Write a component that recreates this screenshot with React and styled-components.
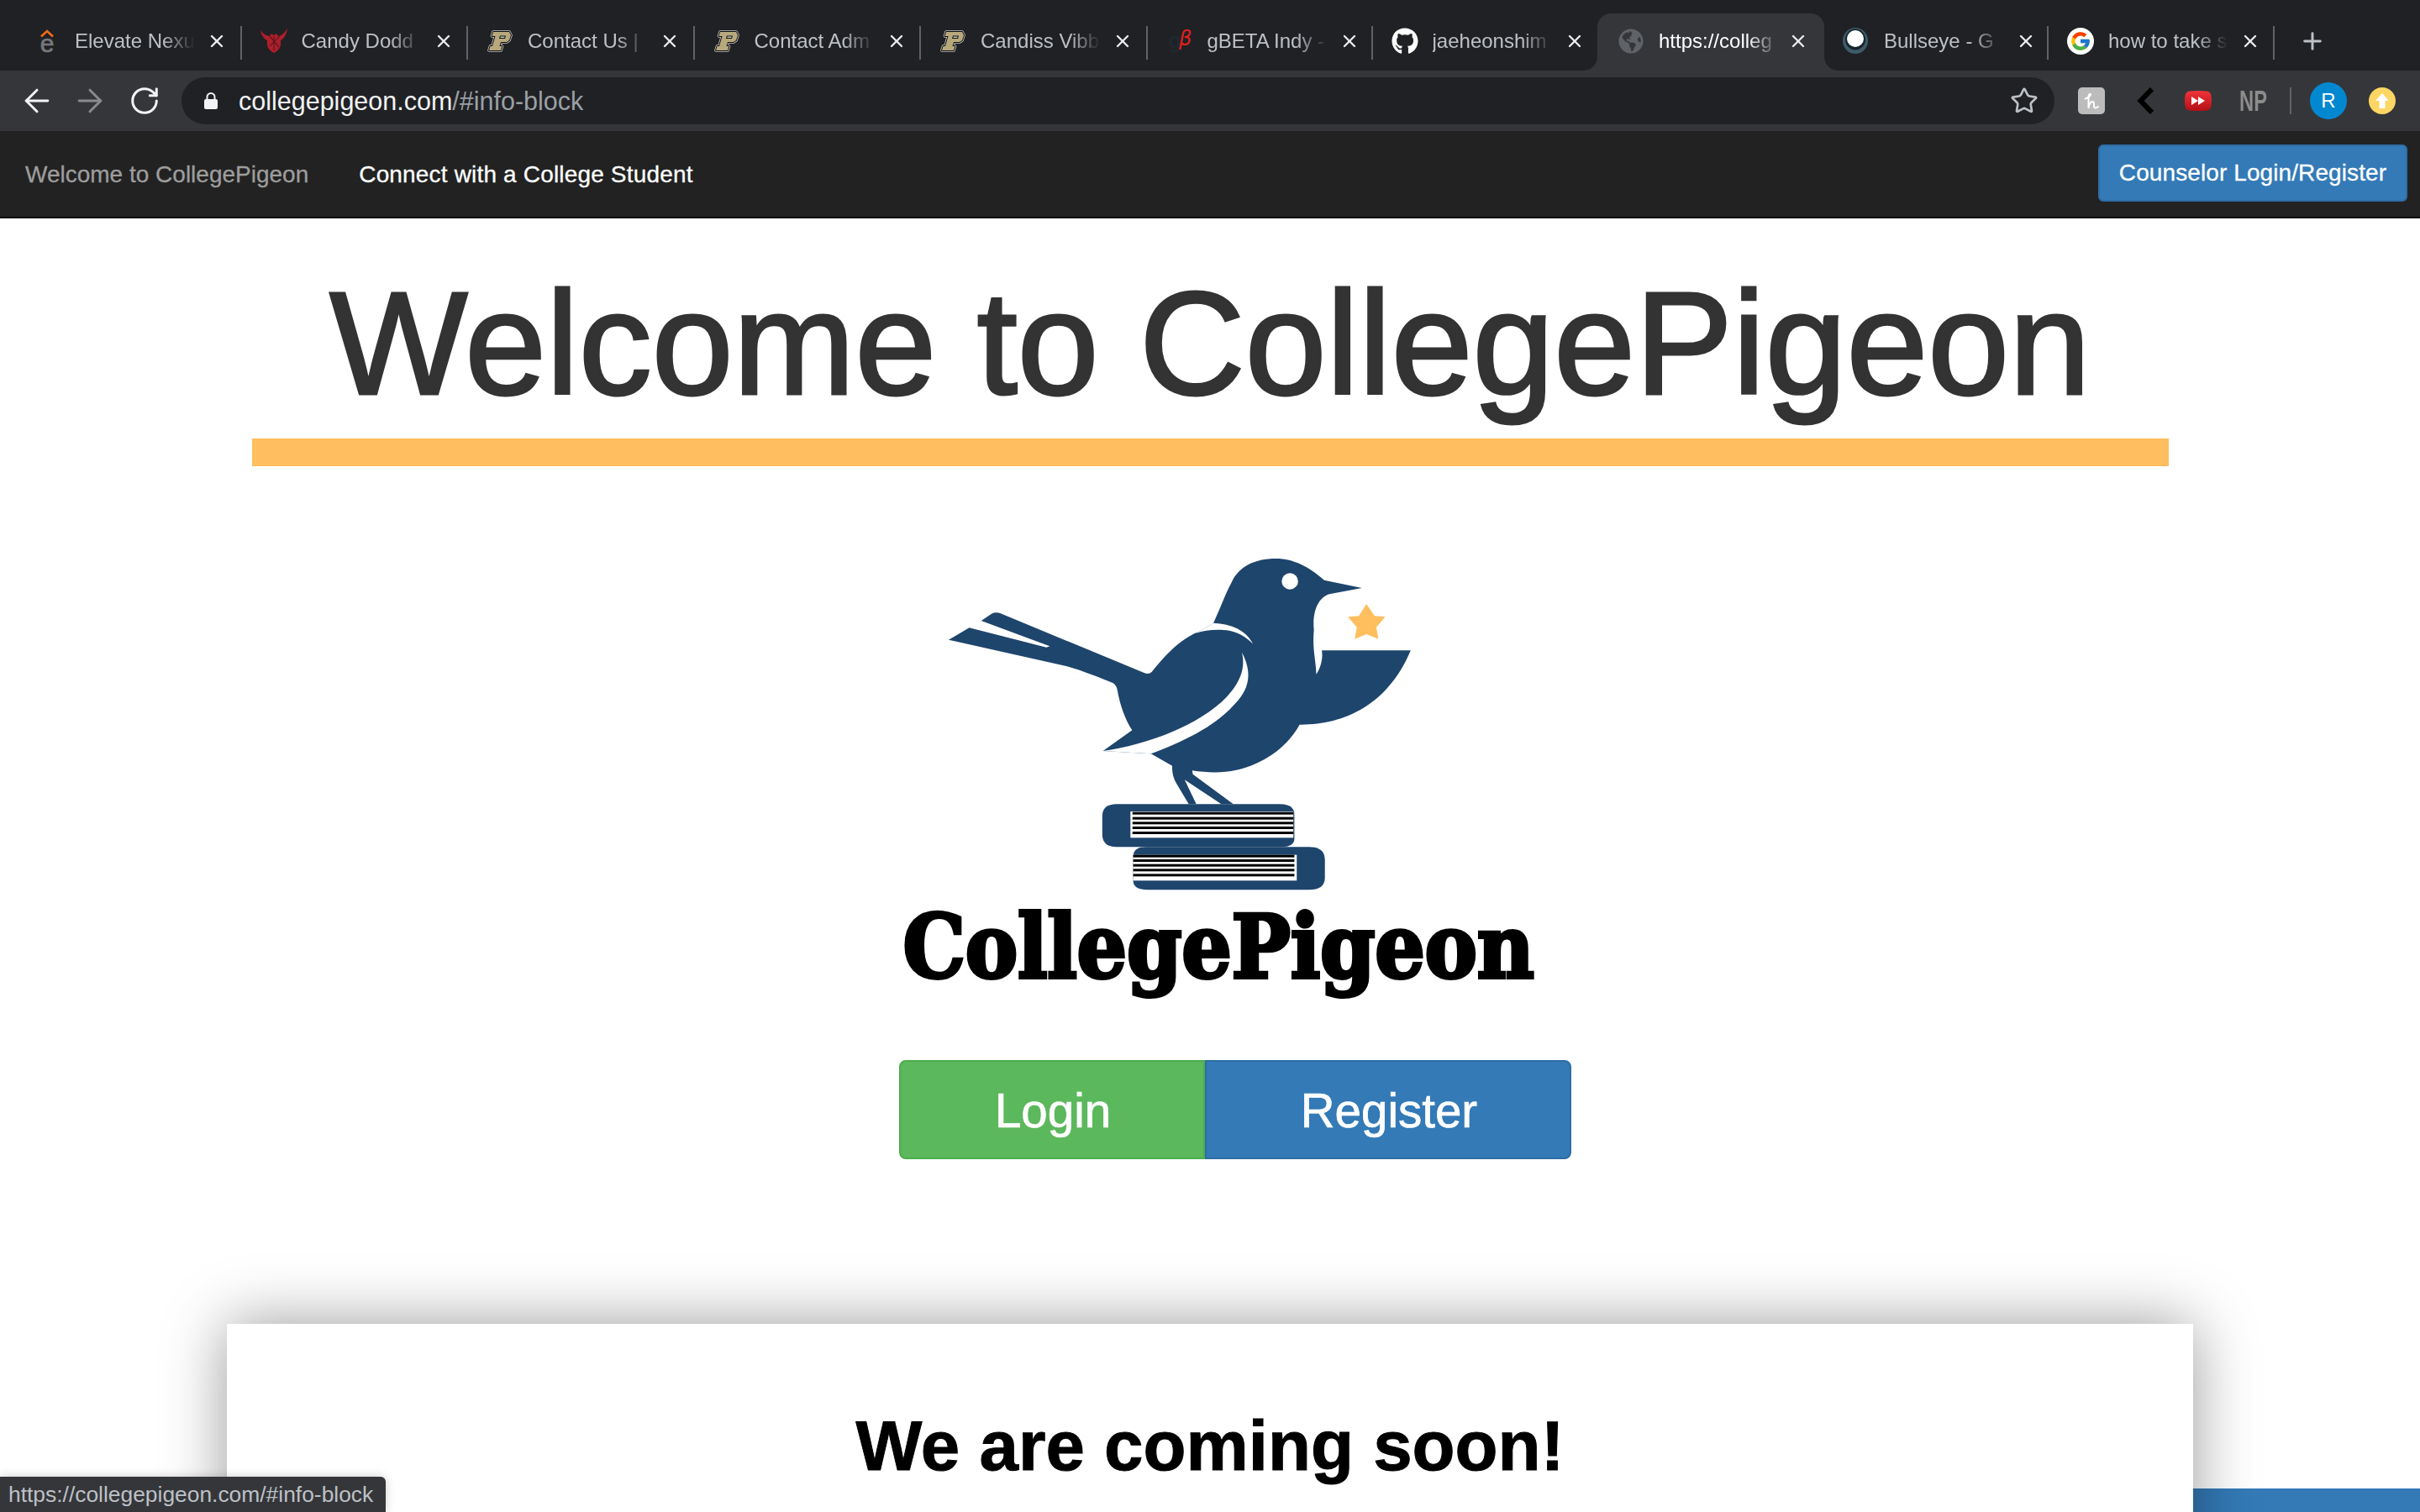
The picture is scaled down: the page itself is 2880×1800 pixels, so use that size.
import React from "react";
import styled, { createGlobalStyle } from "styled-components";
import { ArrowLeft, ArrowRight, RotateCw, Star, X, Plus } from "lucide-react";
import { FaGithub, FaGlobeAmericas } from "react-icons/fa";
import { FcGoogle } from "react-icons/fc";

const Global = createGlobalStyle`
  html, body { margin: 0; padding: 0; background: #fff; }
  #root { width: 2880px; height: 1800px; overflow: hidden; font-family: "Liberation Sans", Arial, sans-serif; }
  * { box-sizing: border-box; }
`;

const Frame = styled.div`
  position: relative;
  width: 2880px;
  height: 1800px;
  overflow: hidden;
  background: #fff;
`;

const TabStrip = styled.div`
  display: flex;
  height: 84px;
  padding: 16px 0 0 18px;
  background: #202124;
  align-items: stretch;
`;

const Tab = styled.div`
  position: relative;
  display: flex;
  align-items: center;
  flex: none;
  width: ${(p) => p.$w || 269.5}px;
  padding-left: ${(p) => (p.$active ? 24 : 22)}px;
  padding-bottom: 2px;
  margin-left: ${(p) => (p.$active ? -2 : 0)}px;
  background: ${(p) => (p.$active ? "#35363a" : "transparent")};
  border-radius: 16px 16px 0 0;
  &::after {
    content: "";
    display: ${(p) => (p.$sep ? "block" : "none")};
    position: absolute;
    right: 0;
    top: 15px;
    width: 2px;
    height: 40px;
    background: #5f6368;
  }
  &::before {
    content: "";
    display: ${(p) => (p.$active ? "block" : "none")};
    position: absolute;
    left: -16px;
    right: -16px;
    bottom: 0;
    height: 16px;
    background:
      radial-gradient(circle at 0 0, transparent 15.5px, #35363a 16px) left bottom / 16px 16px no-repeat,
      radial-gradient(circle at 100% 0, transparent 15.5px, #35363a 16px) right bottom / 16px 16px no-repeat;
  }
`;

const Favicon = styled.span`
  display: flex;
  flex: none;
  width: 32px;
  height: 32px;
  align-items: center;
  justify-content: center;
  color: ${(p) => p.$color || "#fff"};
`;

const TabTitle = styled.span`
  flex: none;
  width: 146px;
  margin-left: 17px;
  overflow: hidden;
  white-space: nowrap;
  font-family: "Liberation Sans", Arial, sans-serif;
  font-size: 24px;
  line-height: 32px;
  color: ${(p) => (p.$active ? "#fff" : "#bdc1c6")};
  -webkit-mask-image: linear-gradient(to right, #000 72%, transparent 98%);
  mask-image: linear-gradient(to right, #000 72%, transparent 98%);
`;

const TabClose = styled.span`
  display: flex;
  flex: none;
  width: 24px;
  margin-left: ${(p) => (p.$active ? 8 : 11)}px;
  justify-content: center;
  color: #e8eaed;
`;

const NewTab = styled.span`
  display: flex;
  margin-left: 29px;
  align-items: center;
  padding-bottom: 2px;
  color: #bdc1c6;
`;

const Toolbar = styled.div`
  display: flex;
  align-items: center;
  height: 72px;
  padding-left: 22px;
  background: #35363a;
`;

const NavIcon = styled.span`
  display: flex;
  flex: none;
  margin-left: ${(p) => p.$gap || 0}px;
  color: ${(p) => (p.$dim ? "#8a8b8d" : "#f1f3f4")};
`;

const StarIcon = styled.span`
  display: flex;
  flex: none;
  color: #bdc1c6;
`;

const Omnibox = styled.div`
  display: flex;
  align-items: center;
  flex: none;
  width: 2229px;
  height: 56px;
  margin-left: 25px;
  padding: 0 19px 0 27px;
  border-radius: 28px;
  background: #202124;
`;

const LockGlyph = styled.svg`
  flex: none;
`;

const Url = styled.div`
  flex: 1;
  margin-left: 25px;
  font-family: "Liberation Sans", Arial, sans-serif;
  font-size: 30.5px;
  color: #f1f3f4;
  white-space: nowrap;
`;

const UrlRest = styled.span`
  color: #9aa0a6;
`;

const Extensions = styled.div`
  display: flex;
  align-items: center;
  margin-left: 28px;
`;

const HoneyIcon = styled.span`
  display: flex;
  flex: none;
  width: 32px;
  height: 32px;
  border-radius: 5px;
  background: #bcbcbc;
`;

const ExtSlot = styled.span`
  display: flex;
  flex: none;
  margin-left: ${(p) => p.$gap}px;
`;

const NpIcon = styled.span`
  display: block;
  flex: none;
  width: 30px;
  margin-left: 33px;
  font-family: "Liberation Sans Narrow", "Liberation Sans", sans-serif;
  font-weight: 700;
  font-size: 35px;
  line-height: 36px;
  color: #8c8c8c;
  white-space: nowrap;
  transform: scaleX(0.68);
  transform-origin: left center;
`;

const ExtDivider = styled.span`
  flex: none;
  width: 2px;
  height: 32px;
  margin-left: 30px;
  background: #5f6368;
`;

const Avatar = styled.span`
  display: flex;
  flex: none;
  width: 44px;
  height: 44px;
  margin-left: 22px;
  align-items: center;
  justify-content: center;
  border-radius: 50%;
  background: #0288d1;
  color: #fff;
  font-size: 24px;
`;

const UpdateBadge = styled.span`
  display: flex;
  flex: none;
  width: 32px;
  height: 32px;
  margin-left: 26px;
  align-items: center;
  justify-content: center;
  border-radius: 50%;
  background: #fdd663;
`;

const Navbar = styled.nav`
  display: flex;
  align-items: center;
  height: 104px;
  padding-left: 30px;
  background: #222;
  border-bottom: 2px solid #080808;
  font-size: 28px;
  -webkit-text-stroke: 0.3px currentColor;
`;

const Brand = styled.a`
  padding-top: 2px;
  color: #9d9d9d;
`;

const NavLink = styled.a`
  margin-left: 60px;
  padding-top: 2px;
  color: #fff;
  letter-spacing: 0.17px;
`;

const CounselorButton = styled.button`
  width: 368px;
  height: 68px;
  margin: -2px 15px 0 auto;
  padding: 0;
  border: 2px solid #2e6da4;
  border-radius: 6px;
  background: #337ab7;
  color: #fff;
  font-family: inherit;
  font-size: 28px;
  letter-spacing: 0.1px;
  -webkit-text-stroke: 0.3px #fff;
`;

const Hero = styled.main`
  display: flex;
  flex-direction: column;
  align-items: center;
  height: 1512px;
`;

const Title = styled.h1`
  margin: 53px 0 0 0;
  font-size: 174px;
  line-height: 192px;
  font-weight: 400;
  color: #333;
  -webkit-text-stroke: 3px #333;
  white-space: nowrap;
`;

const Rule = styled.div`
  flex: none;
  width: 2281px;
  height: 33px;
  margin-top: 17px;
  background: #ffbe5f;
`;

const LogoArt = styled.svg`
  display: block;
  flex: none;
  width: 640px;
  height: 440px;
  margin: 85px 80px 0 0;
`;

const LogoWord = styled.div`
  margin: -14px 0 0 20px;
  font-family: "DejaVu Serif", "Liberation Serif", serif;
  font-stretch: condensed;
  font-weight: 700;
  font-size: 104px;
  line-height: 124px;
  letter-spacing: -0.2px;
  color: #000;
  -webkit-text-stroke: 4px #000;
  white-space: nowrap;
`;

const ButtonGroup = styled.div`
  display: flex;
  flex: none;
  margin: 72px 0 0 60px;
  height: 118px;
`;

const BigButton = styled.button`
  flex: none;
  width: ${(p) => p.$w}px;
  height: 118px;
  padding: 2px 0 0 2px;
  border: 2px solid ${(p) => p.$edge};
  border-radius: ${(p) => p.$radius};
  background: ${(p) => p.$bg};
  color: #fff;
  font-family: inherit;
  font-size: 56.5px;
  -webkit-text-stroke: 0.7px #fff;
`;

const Card = styled.section`
  position: relative;
  z-index: 1;
  flex: none;
  width: 2340px;
  height: 500px;
  margin-top: 196px;
  padding-top: 95px;
  background: #fff;
  box-shadow: 0 0 70px rgba(0, 0, 0, 0.4);
  text-align: center;
`;

const CardTitle = styled.h2`
  margin: 0;
  font-size: 83.5px;
  line-height: 100px;
  font-weight: 700;
  color: #000;
  -webkit-text-stroke: 1px #000;
`;

const Band = styled.div`
  height: 100px;
  background: #337ab7;
`;

const StatusBubble = styled.div`
  position: absolute;
  z-index: 2;
  left: 0;
  bottom: 0;
  width: 459px;
  height: 42px;
  padding-left: 10px;
  border-top-right-radius: 6px;
  background: #35363a;
  box-shadow: 0 0 12px rgba(0, 0, 0, 0.2);
  color: #bdc1c6;
  font-size: 26.4px;
  line-height: 42px;
  white-space: nowrap;
`;

const ElevateIcon = () => (
  <svg width="32" height="32" viewBox="0 0 32 32" overflow="visible">
    <path d="M9 10.5 L16 4 L23 10.5" fill="none" stroke="#f26a1b" strokeWidth="2.6" />
    <text x="16" y="29" textAnchor="middle" fontSize="30" fill="#77787b" stroke="#77787b" strokeWidth="0.7" fontFamily="Liberation Sans">e</text>
  </svg>
);

const CandyIcon = () => (
  <svg width="32" height="30" viewBox="0 0 32 30">
    <path d="M0 2 C4 7 8 9 11 9 L13 6 L16 8 L19 6 L21 9 C24 9 28 6 32 0 C31 7 28 12 24 14 L24 19 C24 23 20 27 16 29 C12 27 8 23 8 19 L8 14 C4 12 1 8 0 2 Z" fill="#b01e2a" />
    <path d="M10 8 L22 22 M23 9 L11 21 M16 9 V26" stroke="#5d1a20" strokeWidth="1.2" />
  </svg>
);

const PurdueIcon = () => {
  const p = "M8 3 H27 L29 7 L27 13 L24 15 H17 L15.5 20 H18.5 L17 25 H3 L4.5 20 H7 L10.5 8 H6.5 Z M16 7.5 L15 11 H22 L23 7.5 Z";
  return (
    <svg width="32" height="28" viewBox="0 0 32 28">
      <path d={p} fill="none" stroke="#c9c9c9" strokeWidth="3.6" strokeLinejoin="round" />
      <path d={p} fill="none" stroke="#111" strokeWidth="2" strokeLinejoin="round" />
      <path d={p} fill="#b8a97c" fillRule="evenodd" />
    </svg>
  );
};

const BetaIcon = () => (
  <svg width="32" height="32" viewBox="0 0 32 32" overflow="visible">
    <text x="3" y="24" fontSize="26" fontFamily="Liberation Sans" fill="#1d2a35">g</text>
    <text x="15" y="21" fontSize="24" fontStyle="italic" fontFamily="DejaVu Sans" fill="#e3201f">β</text>
  </svg>
);

const BullseyeIcon = () => (
  <svg width="32" height="32" viewBox="0 0 32 32">
    <ellipse cx="15" cy="15.5" rx="15" ry="15.5" fill="#3d5c68" />
    <ellipse cx="15" cy="14" rx="12" ry="12.5" fill="#15232b" />
    <circle cx="15" cy="13" r="10" fill="#fff" />
  </svg>
);

const LockIcon = () => (
  <LockGlyph width="16" height="20" viewBox="0 0 16 20">
    <rect x="0" y="8" width="16" height="12" rx="2" fill="#f1f3f4" />
    <path d="M3.5 9 V5.5 a4.5 4.5 0 0 1 9 0 V9" fill="none" stroke="#f1f3f4" strokeWidth="2" />
  </LockGlyph>
);

const HoneyGlyph = () => (
  <svg width="32" height="32" viewBox="0 0 32 32">
    <path d="M8.5 13.5 C11 13 15.5 10 15 8.3 C14.5 7 12.5 8.5 12.5 11 L12.5 25 C13 20.5 15 17 17.5 17 C20 17 18 22 19.5 24 C20.5 25 22 24.5 24 23" fill="none" stroke="#fff" strokeWidth="2" strokeLinecap="round" />
  </svg>
);

const ChevronExt = () => (
  <svg width="20" height="32" viewBox="0 0 20 32">
    <path d="M18 2 L4.5 16 L18 30" fill="none" stroke="#000" strokeWidth="6" />
  </svg>
);

const RedExt = () => (
  <svg width="32" height="24" viewBox="0 0 32 24">
    <defs>
      <linearGradient id="redExtFill" x1="0" y1="0" x2="0" y2="1">
        <stop offset="0" stopColor="#f0353a" />
        <stop offset="1" stopColor="#b30f14" />
      </linearGradient>
    </defs>
    <path d="M6 0.5 Q16 -0.5 26 0.5 Q31 1 31.5 6 Q32.5 12 31.5 18 Q31 23 26 23.5 Q16 24.5 6 23.5 Q1 23 0.5 18 Q-0.5 12 0.5 6 Q1 1 6 0.5 Z" fill="url(#redExtFill)" />
    <path d="M8 7 L16 12 L8 17 Z M16 7 L24 12 L16 17 Z" fill="#fff" />
  </svg>
);

const ArrowUp = () => (
  <svg width="18" height="20" viewBox="0 0 18 20">
    <path d="M9 1 L17 10 H12.5 V19 H5.5 V10 H1 Z" fill="#fff" />
  </svg>
);

const Logo = () => (
  <LogoArt viewBox="0 0 1568 1320" preserveAspectRatio="none">
    <path
      fill="#1e456c"
      d="M1325 180 L1215 152 C1190 125 1140 75 1075 75 C1010 75 965 105 945 160 C925 205 910 260 892 305 L850 335 C790 365 745 430 712 480 Q703 490 690 483 L270 270 Q258 265 245 272 L215 297 L415 388 L405 392 L180 322 L120 365 L460 458 C510 475 560 500 600 520 Q610 530 612 545 C620 600 635 650 655 688 L570 762 L710 772 L772 815 Q770 850 785 880 L820 952 L842 952 L808 865 L915 952 L950 952 L832 845 L830 832 C900 845 960 840 1020 805 C1080 770 1120 720 1143 668 C1270 670 1400 600 1467 403 L1208 403 C1212 430 1205 465 1192 488 C1190 430 1180 400 1185 330 C1180 270 1195 215 1230 202 Z"
    />
    <path fill="#fff" d="M892 305 C950 308 990 335 1007 380 C985 350 950 330 920 330 C890 328 865 332 840 342 Z" />
    <path fill="#fff" d="M975 410 C1005 480 1000 540 950 600 C890 680 800 730 710 772 L570 762 C700 740 850 670 930 570 C975 510 985 460 975 410 Z" />
    <ellipse cx="1115" cy="156" rx="24" ry="29" fill="#fff" />
    <polygon fill="#ffbf5e" points="1338,237 1362,280 1393,283 1367,320 1373,362 1338,345 1304,362 1310,320 1284,283 1316,280" />
    <path fill="#1e456c" d="M610 952 H1085 Q1128 952 1128 990 V1075 Q1128 1105 1090 1105 H610 Q568 1105 568 1060 V995 Q568 952 610 952 Z" />
    <rect x="650" y="978" width="475" height="94" fill="#fff" />
    {[985, 1003, 1020, 1037, 1055].map((y) => (
      <rect key={y} x="656" y={y - 5} width="469" height="9" fill="#000" />
    ))}
    <path fill="#1e456c" d="M695 1105 H1170 Q1217 1105 1217 1150 V1215 Q1217 1258 1170 1258 H700 Q658 1258 658 1225 V1140 Q658 1105 695 1105 Z" />
    <rect x="658" y="1133" width="477" height="92" fill="#fff" />
    {[1137, 1153, 1170, 1187, 1205].map((y) => (
      <rect key={y} x="658" y={y - 4} width="470" height="9" fill="#000" />
    ))}
  </LogoArt>
);

const tabs = [
  { title: "Elevate Nexu", icon: <ElevateIcon />, sep: true },
  { title: "Candy Dodd", icon: <CandyIcon />, sep: true },
  { title: "Contact Us |", icon: <PurdueIcon />, sep: true },
  { title: "Contact Adm", icon: <PurdueIcon />, sep: true },
  { title: "Candiss Vibb", icon: <PurdueIcon />, sep: true },
  { title: "gBETA Indy -", icon: <BetaIcon />, sep: true, w: 268 },
  { title: "jaeheonshim", icon: <FaGithub size={32} />, w: 269.5 },
  { title: "https://colleg", icon: <Favicon $color="#5f6368"><FaGlobeAmericas size={30} /></Favicon>, active: true, w: 270 },
  { title: "Bullseye - G", icon: <BullseyeIcon />, sep: true, w: 267 },
  { title: "how to take s", icon: <FcGoogle size={32} style={{ background: "#fff", borderRadius: "50%", padding: 3 }} />, sep: true, w: 269 },
];

export default function App() {
  return (
    <Frame>
      <Global />
      <TabStrip>
        {tabs.map((t) => (
          <Tab key={t.title} $active={t.active} $sep={t.sep} $w={t.w}>
            <Favicon>{t.icon}</Favicon>
            <TabTitle $active={t.active}>{t.title}</TabTitle>
            <TabClose $active={t.active}><X size={24} strokeWidth={2.4} /></TabClose>
          </Tab>
        ))}
        <NewTab><Plus size={32} strokeWidth={2.2} /></NewTab>
      </TabStrip>
      <Toolbar>
        <NavIcon><ArrowLeft size={44} strokeWidth={1.6} /></NavIcon>
        <NavIcon $dim $gap={19}><ArrowRight size={44} strokeWidth={1.6} /></NavIcon>
        <NavIcon $gap={24}><RotateCw size={38} strokeWidth={1.9} /></NavIcon>
        <Omnibox>
          <LockIcon />
          <Url>collegepigeon.com<UrlRest>/#info-block</UrlRest></Url>
          <StarIcon><Star size={34} strokeWidth={1.9} /></StarIcon>
        </Omnibox>
        <Extensions>
          <HoneyIcon><HoneyGlyph /></HoneyIcon>
          <ExtSlot $gap={38}><ChevronExt /></ExtSlot>
          <ExtSlot $gap={37}><RedExt /></ExtSlot>
          <NpIcon>NP</NpIcon>
          <ExtDivider />
          <Avatar>R</Avatar>
          <UpdateBadge><ArrowUp /></UpdateBadge>
        </Extensions>
      </Toolbar>
      <Navbar>
        <Brand>Welcome to CollegePigeon</Brand>
        <NavLink>Connect with a College Student</NavLink>
        <CounselorButton>Counselor Login/Register</CounselorButton>
      </Navbar>
      <Hero>
        <Title>Welcome to CollegePigeon</Title>
        <Rule />
        <Logo />
        <LogoWord>CollegePigeon</LogoWord>
        <ButtonGroup>
          <BigButton $w={364} $bg="#5cb85c" $edge="#4cae4c" $radius="8px 0 0 8px">Login</BigButton>
          <BigButton $w={436} $bg="#337ab7" $edge="#2e6da4" $radius="0 8px 8px 0">Register</BigButton>
        </ButtonGroup>
        <Card>
          <CardTitle>We are coming soon!</CardTitle>
        </Card>
      </Hero>
      <Band />
      <StatusBubble>https://collegepigeon.com/#info-block</StatusBubble>
    </Frame>
  );
}
